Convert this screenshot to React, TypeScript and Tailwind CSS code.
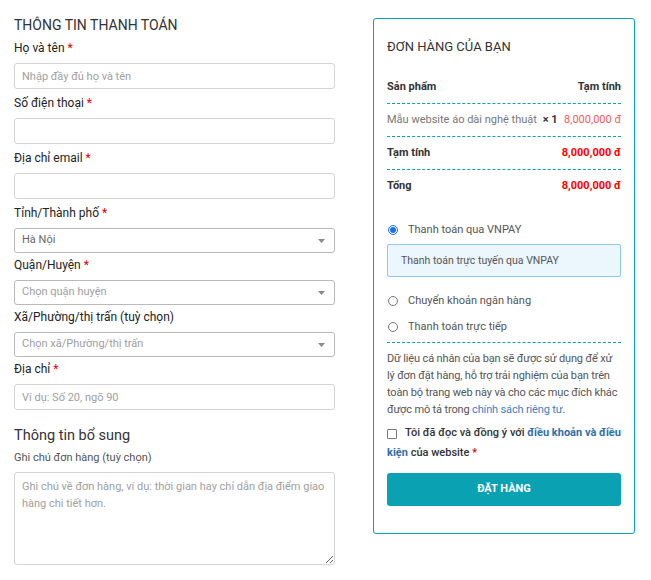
const teal = "#0aa1b3";

function Req() {
  return <span className="text-[#e00000]"> *</span>;
}

function Label({ children, req }: { children: React.ReactNode; req?: boolean }) {
  return (
    <label className="mb-[7px] block h-4 text-[12px] leading-4 text-[#222]">
      {children}
      {req && <Req />}
    </label>
  );
}

function Input({ placeholder }: { placeholder?: string }) {
  return (
    <input
      placeholder={placeholder}
      className="mb-[6px] block h-[26px] w-full rounded-[3px] border border-[#d4d4d4] px-[7px] text-[11px] text-[#333] outline-none placeholder:text-[#a0a0a0]"
    />
  );
}

function Select({ value, muted }: { value: string; muted?: boolean }) {
  return (
    <div className="mb-[4px] flex h-[25px] items-center justify-between rounded-[3px] border border-[#b9b9b9] px-[7px]">
      <span className={`text-[11px] ${muted ? "text-[#a0a0a0]" : "text-[#666]"}`}>{value}</span>
      <svg width="7" height="4" viewBox="0 0 7 4" className="mr-[2px]">
        <path d="M0 0h7L3.5 4z" fill="#888" />
      </svg>
    </div>
  );
}

function Dash() {
  return <div className="border-t border-dashed" style={{ borderColor: teal }} />;
}

function Radio({ checked, label }: { checked?: boolean; label: string }) {
  return (
    <div className="flex h-[26px] items-center">
      <span
        className={`ml-[1px] grid h-[10px] w-[10px] place-items-center rounded-full border ${
          checked ? "border-[#1a73e8]" : "border-[#777]"
        }`}
      >
        {checked && <span className="h-[6px] w-[6px] rounded-full bg-[#1a73e8]" />}
      </span>
      <span className="ml-[10px] text-[11px] text-[#555]">{label}</span>
    </div>
  );
}

export default function App() {
  return (
    <div
      className="flex w-[651px] gap-[38px] bg-white pl-[14px] pt-[15px] text-[#333]"
      style={{ fontFamily: "Roboto, 'Liberation Sans', sans-serif" }}
    >
      <div className="w-[321px] shrink-0">
        <h2 className="mb-[5px] text-[14px] leading-5 uppercase text-[#333]">Thông tin thanh toán</h2>
        <Label req>Họ và tên</Label>
        <Input placeholder="Nhập đầy đủ họ và tên" />
        <Label req>Số điện thoại</Label>
        <Input />
        <Label req>Địa chỉ email</Label>
        <Input />
        <Label req>Tỉnh/Thành phố</Label>
        <Select value="Hà Nội" />
        <Label req>Quận/Huyện</Label>
        <Select value="Chọn quận huyện" muted />
        <Label>Xã/Phường/thị trấn (tuỳ chọn)</Label>
        <Select value="Chọn xã/Phường/thị trấn" muted />
        <Label req>Địa chỉ</Label>
        <Input placeholder="Ví dụ: Số 20, ngõ 90" />
        <h3 className="mt-[16px] text-[14.5px] leading-5 text-[#333]">Thông tin bổ sung</h3>
        <div className="mt-[4px] mb-[6px] text-[11px] leading-4 text-[#555]">Ghi chú đơn hàng (tuỳ chọn)</div>
        <textarea
          placeholder="Ghi chú về đơn hàng, ví dụ: thời gian hay chỉ dẫn địa điểm giao hàng chi tiết hơn."
          className="block h-[93px] w-full rounded-[3px] border border-[#d4d4d4] px-[7px] py-[5px] text-[11px] leading-[17px] outline-none placeholder:text-[#a0a0a0]"
        />
      </div>

      <div
        className="mt-[3px] mb-[47px] w-[262px] shrink-0 self-start rounded-[3px] border px-[13px] pt-[18px] pb-[27px]"
        style={{ borderColor: teal }}
      >
        <h2 className="mb-[22px] text-[13px] leading-5 uppercase text-[#333]">Đơn hàng của bạn</h2>
        <div className="flex justify-between pb-[8px] text-[11px] leading-4 font-bold text-[#333]">
          <span>Sản phẩm</span>
          <span>Tạm tính</span>
        </div>
        <Dash />
        <div className="flex items-center justify-between py-[8px] text-[11px] leading-4">
          <span className="text-[#777]">
            Mẫu website áo dài nghệ thuật <b className="ml-[3px] font-bold text-[#333]">× 1</b>
          </span>
          <span className="text-[#f35a5a]">8,000,000 đ</span>
        </div>
        <Dash />
        <div className="flex justify-between py-[8px] text-[11px] leading-4 font-bold">
          <span>Tạm tính</span>
          <span className="text-[#f00]">8,000,000 đ</span>
        </div>
        <Dash />
        <div className="flex justify-between py-[8px] text-[11px] leading-4 font-bold">
          <span>Tổng</span>
          <span className="text-[#f00]">8,000,000 đ</span>
        </div>

        <div className="mt-[15px]">
          <Radio checked label="Thanh toán qua VNPAY" />
          <div className="mt-[1px] mb-[11px] flex h-[33px] items-center rounded-[2px] border border-[#8ec9f0] bg-[#ebf6fd] px-[13px] text-[10.5px] text-[#555]">
            Thanh toán trực tuyến qua VNPAY
          </div>
          <Radio label="Chuyển khoản ngân hàng" />
          <Radio label="Thanh toán trực tiếp" />
        </div>
        <div className="mt-[2px]">
          <Dash />
        </div>
        <p className="mt-[7px] text-[11px] leading-[17px] tracking-[-0.15px] text-[#555]">
          Dữ liệu cá nhân của bạn sẽ được sử dụng để xử lý đơn đặt hàng, hỗ trợ trải nghiệm của bạn trên toàn bộ trang
          web này và cho các mục đích khác được mô tả trong <a className="text-[#3b7fc4]">chính sách riêng tư</a>.
        </p>
        <div className="mt-[5px] text-[11px] leading-[20px] font-medium text-[#333]">
          <span className="mr-[8px] inline-block h-[10px] w-[10px] translate-y-[1px] rounded-[1px] border border-[#777] align-middle" />
          Tôi đã đọc và đồng ý với <a className="font-bold text-[#2f6fa8]">điều khoản và điều kiện</a> của website
          <Req />
        </div>
        <button
          className="mt-[10px] flex h-[33px] w-full items-center justify-center rounded-[3px] text-[11px] font-bold uppercase text-white"
          style={{ backgroundColor: teal }}
        >
          Đặt hàng
        </button>
      </div>
    </div>
  );
}
